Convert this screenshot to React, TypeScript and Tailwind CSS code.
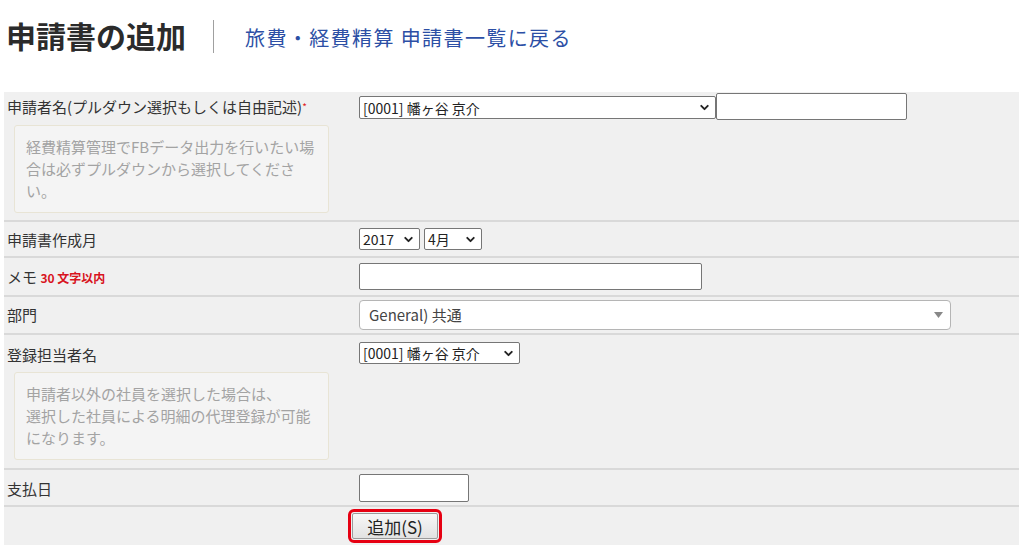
import { ChevronDown } from 'lucide-react';

const jp = { fontFamily: '"Noto Sans CJK JP", "Noto Sans", "Liberation Sans", sans-serif' };

function FakeSelect({ text, className }: { text: string; className?: string }) {
  return (
    <div
      className={`flex h-[22px] items-center justify-between rounded-[2px] border border-[#767676] bg-white pl-[3px] pr-[4px] text-[14px] leading-none text-[#222] ${className ?? ''}`}
    >
      <span className="whitespace-nowrap">{text}</span>
      <ChevronDown size={13} strokeWidth={3.5} className="shrink-0 text-[#222]" />
    </div>
  );
}

function TextBox({ className }: { className?: string }) {
  return <div className={`rounded-[2px] border border-[#767676] bg-white ${className ?? ''}`} />;
}

function Hint({ children, className }: { children: React.ReactNode; className?: string }) {
  return (
    <div
      className={`ml-[7px] w-[315px] whitespace-nowrap rounded-[3px] border border-[#e8e4d5] bg-[#f4f4f4] px-[11px] py-[10px] text-[15px] leading-[22px] text-[#a3a3a3] ${className ?? ''}`}
    >
      {children}
    </div>
  );
}

function Row({
  label,
  children,
  className,
}: {
  label: React.ReactNode;
  children?: React.ReactNode;
  className?: string;
}) {
  return (
    <div className={`flex border-b-2 border-[#d9d9d9] ${className ?? ''}`}>
      <div className="w-[355px] shrink-0 pl-[3px] text-[15px] leading-[20px] text-[#333]">{label}</div>
      <div className="flex-1">{children}</div>
    </div>
  );
}

export default function App() {
  return (
    <div className="h-[547px] w-[1019px] overflow-hidden bg-white" style={jp}>
      <div className="flex h-[92px] items-start pt-[15px]">
        <h1 className="pl-[6px] text-[30px] font-bold leading-[40px] text-[#2b2b2b]">申請書の追加</h1>
        <div className="ml-[27px] mt-[5px] h-[33px] w-px bg-[#a0a0a0]" />
        <a className="ml-[31px] mt-[10px] text-[20px] leading-[26px] tracking-[1.4px] text-[#2c4fa5]">
          旅費・経費精算 申請書一覧に戻る
        </a>
      </div>

      <div className="ml-[4px] bg-[#f0f0f0]">
        {/* 申請者名 */}
        <Row
          className="h-[130px]"
          label={
            <div className="pt-[5px]">
              <div>
                申請者名(プルダウン選択もしくは自由記述)
                <span className="relative -top-[2px] text-[10px] text-[#e02020]">*</span>
              </div>
              <Hint className="mt-[6px]">
                経費精算管理でFBデータ出力を行いたい場
                <br />
                合は必ずプルダウンから選択してくださ
                <br />
                い。
              </Hint>
            </div>
          }
        >
          <div className="flex items-start pt-[1px]">
            <FakeSelect text="[0001] 幡ヶ谷 京介" className="mt-[3px] h-[23px] w-[357px]" />
            <TextBox className="h-[27px] w-[191px]" />
          </div>
        </Row>

        {/* 申請書作成月 */}
        <Row className="h-[36px] items-center" label={<div className="pt-[1px]">申請書作成月</div>}>
          <div className="flex gap-[4px]">
            <FakeSelect text="2017" className="w-[61px]" />
            <FakeSelect text="4月" className="w-[58px]" />
          </div>
        </Row>

        {/* メモ */}
        <Row
          className="h-[39px] items-center"
          label={
            <div className="pt-[2px]">
              メモ <span className="text-[12px] font-bold text-[#d8141e]">30 文字以内</span>
            </div>
          }
        >
          <TextBox className="h-[27px] w-[343px]" />
        </Row>

        {/* 部門 */}
        <Row className="h-[38px] items-center" label={<div>部門</div>}>
          <div className="flex h-[30px] w-[592px] items-center justify-between rounded-[4px] border border-[#b5b5b5] bg-white pl-[9px] pr-[7px] text-[15px] text-[#444]">
            <span>General) 共通</span>
            <svg width="9" height="6" viewBox="0 0 9 6">
              <path d="M0 0h9L4.5 6z" fill="#888" />
            </svg>
          </div>
        </Row>

        {/* 登録担当者名 */}
        <Row
          className="h-[135px]"
          label={
            <div className="pt-[10px]">
              <div>登録担当者名</div>
              <Hint className="mt-[7px]">
                申請者以外の社員を選択した場合は、
                <br />
                選択した社員による明細の代理登録が可能
                <br />
                になります。
              </Hint>
            </div>
          }
        >
          <div className="pt-[7px]">
            <FakeSelect text="[0001] 幡ヶ谷 京介" className="h-[20px] w-[161px]" />
          </div>
        </Row>

        {/* 支払日 */}
        <Row className="h-[37px] items-center" label={<div className="pt-[3px]">支払日</div>}>
          <TextBox className="h-[28px] w-[110px]" />
        </Row>

        {/* 追加 */}
        <div className="flex h-[38px] items-center pl-[348px]">
          <button className="h-[26px] w-[86px] rounded-[2px] border border-[#9a9a9a] bg-gradient-to-b from-[#f7f7f7] to-[#e2e2e2] text-[17px] leading-none text-[#222] outline-[3px] outline-offset-[1px] outline-[#e60012] outline-solid">
            追加(S)
          </button>
        </div>
      </div>
    </div>
  );
}
